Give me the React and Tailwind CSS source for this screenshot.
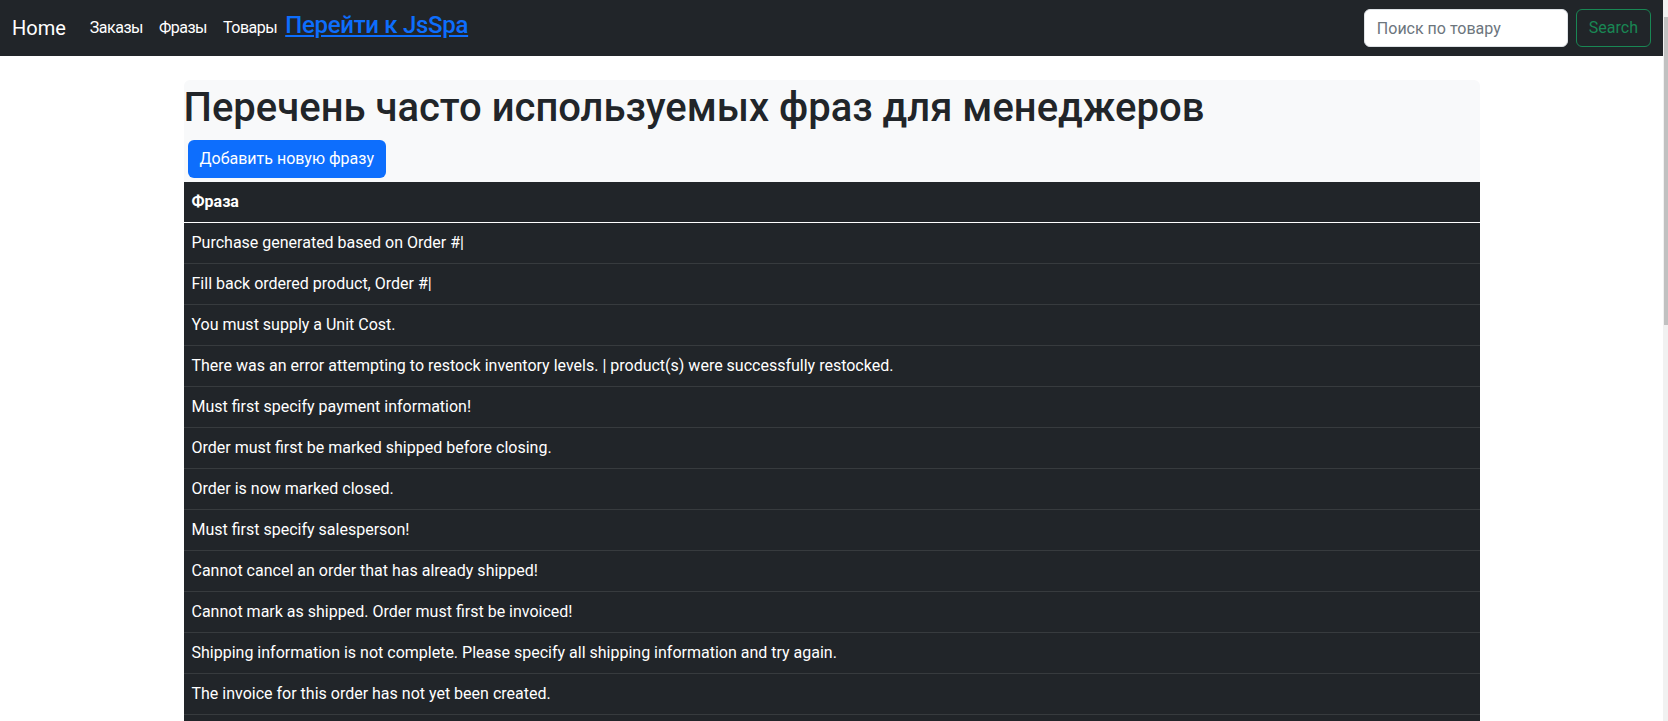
import React from "react";

const phrases = [
  "Purchase generated based on Order #|",
  "Fill back ordered product, Order #|",
  "You must supply a Unit Cost.",
  "There was an error attempting to restock inventory levels. | product(s) were successfully restocked.",
  "Must first specify payment information!",
  "Order must first be marked shipped before closing.",
  "Order is now marked closed.",
  "Must first specify salesperson!",
  "Cannot cancel an order that has already shipped!",
  "Cannot mark as shipped. Order must first be invoiced!",
  "Shipping information is not complete. Please specify all shipping information and try again.",
  "The invoice for this order has not yet been created.",
  "\u00a0",
];

export default function App() {
  return (
    <div className="flex h-[721px] overflow-hidden bg-white text-[#212529] font-['Roboto',sans-serif]">
      <div className="flex-1 min-w-0">
        {/* Navbar */}
        <nav className="h-14 bg-[#212529] flex items-center px-3">
          <a href="#" className="text-xl leading-[30px] text-white mr-4">Home</a>
          <ul className="flex">
            {["Заказы", "Фразы", "Товары"].map((l) => (
              <li key={l}>
                <a href="#" className="block px-2 py-2 text-base leading-6 tracking-[-0.5px] text-white">{l}</a>
              </li>
            ))}
          </ul>
          <a href="#" className="text-2xl font-medium leading-[1.2] tracking-[-0.3px] text-[#0d6efd] underline -mt-[6px]">
            Перейти к JsSpa
          </a>
          <form className="ml-auto flex gap-2">
            <input
              type="search"
              placeholder="Поиск по товару"
              className="w-[204px] h-[38px] rounded-md border border-[#dee2e6] bg-white px-3 text-base outline-none placeholder:text-[#6c757d]"
            />
            <button type="button" className="h-[38px] px-3 rounded-md border border-[#198754] text-base text-[#198754]">
              Search
            </button>
          </form>
        </nav>

        {/* Content */}
        <main className="max-w-[1320px] mx-auto px-3 mt-6">
          <div className="bg-[#f8f9fa] rounded-md">
            <h1 className="pt-1 text-[40px] leading-[1.2] font-medium mb-2">
              Перечень часто используемых фраз для менеджеров
            </h1>
            <button type="button" className="block m-1 h-[38px] px-3 rounded-md bg-[#0d6efd] text-base text-white">
              Добавить новую фразу
            </button>
            <table className="w-full bg-[#212529] text-white text-base">
              <thead>
                <tr className="border-b border-white">
                  <th className="px-2 py-2 leading-6 text-left font-bold">Фраза</th>
                </tr>
              </thead>
              <tbody>
                {phrases.map((p, i) => (
                  <tr key={i} className="border-b border-[#373b3e]">
                    <td className="px-2 py-2 leading-6">{p}</td>
                  </tr>
                ))}
              </tbody>
            </table>
          </div>
        </main>
      </div>

      {/* scrollbar */}
      <div className="w-[5px] bg-[#f1f1f1]">
        <div className="mt-[17px] ml-[1px] h-[308px] bg-[#c1c1c1]" />
      </div>
    </div>
  );
}
